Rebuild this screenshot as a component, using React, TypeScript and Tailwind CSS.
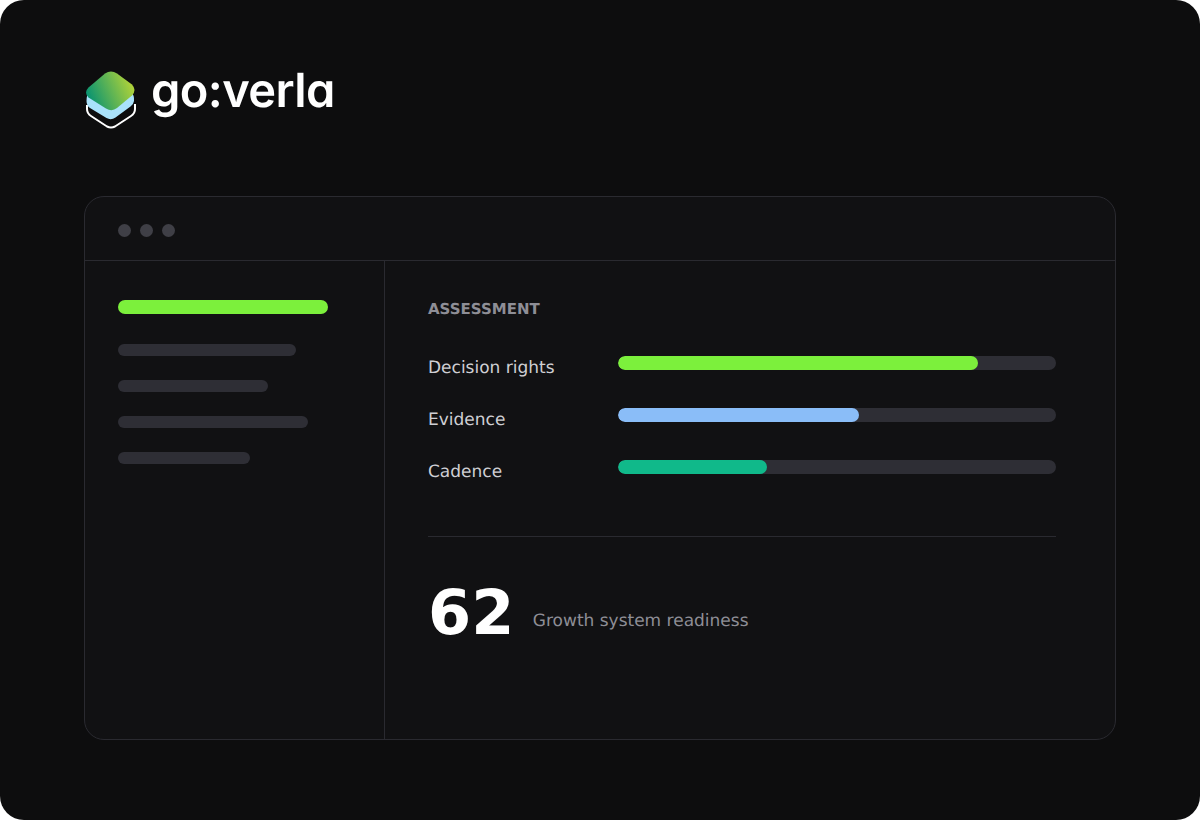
export default function App() {
  const rows = [
    { label: "Decision rights", color: "bg-[#7cf03c]", w: "w-[360px]" },
    { label: "Evidence", color: "bg-[#8abdf8]", w: "w-[241px]" },
    { label: "Cadence", color: "bg-[#10b98a]", w: "w-[149px]" },
  ];
  return (
    <div className="w-[1200px] h-[820px] bg-white font-['DejaVu_Sans',sans-serif] [text-rendering:geometricPrecision]">
      <div className="w-full h-full rounded-[24px] bg-[#0d0d0e] flex flex-col pl-[84px] pr-[84px]">
        <div className="h-[196px] pt-[70px] shrink-0">
          <div className="flex items-start h-[60px]">
            <svg width="52" height="60" viewBox="0 0 52 60" className="ml-[1px] blur-[0.4px]">
              <defs>
                <linearGradient id="lg" x1="0.05" y1="0.65" x2="0.95" y2="0.35">
                  <stop offset="0" stopColor="#0b9470" />
                  <stop offset="1" stopColor="#aed23a" />
                </linearGradient>
              </defs>
              <path d="M2 35 V39 Q2 43.5 6 46 L22 56.5 Q26 58.5 30 56.5 L46 46 Q50 43.5 50 39 V34" fill="none" stroke="#ffffff" strokeWidth="2" />
              <path d="M4 22 L22 12 Q26 10 30 12 L46 22 Q49.5 25 49 31 Q48.5 34.5 45.5 36.5 L30.5 47.5 Q26 50.5 21.5 48 L5 38 Q1.5 35.5 1.5 31 Q1.5 25 4 22 Z" fill="#a9e2fb" />
              <path d="M3.5 17.5 L20 3.5 Q26 -0.5 32 3.5 L47 14.5 Q52 20 47 25.5 L32 38 Q27 42 21 38.5 L3.5 27.5 Q-1.5 22.5 3.5 17.5 Z" fill="url(#lg)" />
            </svg>
            <span className="ml-[14px] mt-[-11px] text-[47px] leading-[64px] font-semibold text-white font-['Inter',sans-serif] [font-feature-settings:'cv11'] tracking-[-0.6px] blur-[0.3px]">go:verla</span>
          </div>
        </div>
        <div className="w-[1032px] h-[544px] rounded-[20px] border border-[#2a2a30] bg-[#111113] flex flex-col overflow-hidden">
          <div className="h-[64px] shrink-0 border-b border-[#2a2a30] flex items-center gap-[9px] pl-[33px] pt-[4px]">
            <div className="w-[13px] h-[13px] rounded-full bg-[#3f3f46]" />
            <div className="w-[13px] h-[13px] rounded-full bg-[#3f3f46]" />
            <div className="w-[13px] h-[13px] rounded-full bg-[#3f3f46]" />
          </div>
          <div className="flex flex-1">
            <div className="w-[300px] border-r border-[#2a2a30] pt-[39px] pl-[33px] flex flex-col">
              <div className="h-[14.4px] w-[210px] rounded-full bg-[#7cf03c] mb-[29.6px]" />
              <div className="flex flex-col gap-[23.6px]">
                <div className="h-[12.4px] w-[178px] rounded-full bg-[#2e2e35]" />
                <div className="h-[12.4px] w-[150px] rounded-full bg-[#2e2e35]" />
                <div className="h-[12.4px] w-[190px] rounded-full bg-[#2e2e35]" />
                <div className="h-[12.4px] w-[132px] rounded-full bg-[#2e2e35]" />
              </div>
            </div>
            <div className="flex-1 pl-[43px] pt-[38px]">
              <div className="text-[15px] leading-[20px] font-bold text-[#8e8e96]">ASSESSMENT</div>
              <div className="mt-[37px] flex flex-col gap-[28px]">
                {rows.map((r) => (
                  <div key={r.label} className="flex h-[24px]">
                    <div className="w-[190px] text-[17px] leading-[24px] text-[#cfcfd4]">{r.label}</div>
                    <div className="w-[438px] h-[14.4px] rounded-full bg-[#2e2e35] overflow-hidden">
                      <div className={`h-full rounded-full ${r.color} ${r.w}`} />
                    </div>
                  </div>
                ))}
              </div>
              <div className="mt-[52px] w-[628px] h-px bg-[#2a2a30]" />
              <div className="mt-[32px] flex items-end gap-[18.5px]">
                <div className="text-[62px] leading-[88px] font-bold text-white">62</div>
                <div className="text-[17px] leading-[24px] pb-[24px] text-[#8e8e96]">Growth system readiness</div>
              </div>
            </div>
          </div>
        </div>
      </div>
    </div>
  );
}
